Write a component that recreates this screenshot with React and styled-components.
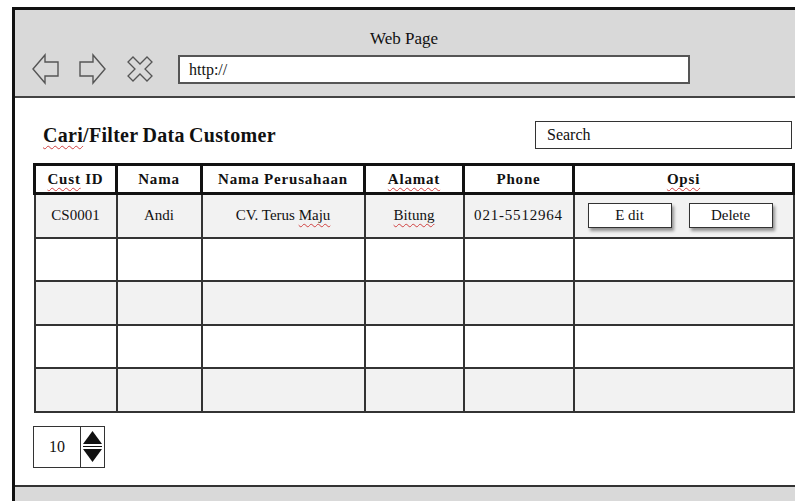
import React from "react";
import styled, { createGlobalStyle } from "styled-components";

const GlobalStyle = createGlobalStyle`
  html, body {
    margin: 0;
    padding: 0;
    background: #fff;
    font-family: "Liberation Serif", "Times New Roman", serif;
    color: #111;
  }
`;

const Frame = styled.div`
  margin: 7px 0 0 12px;
  height: calc(100vh - 7px);
  border-top: 3px solid #111;
  border-left: 3px solid #111;
  display: flex;
  flex-direction: column;
  box-sizing: border-box;
`;

const Header = styled.div`
  background: #d9d9d9;
  border-bottom: 2px solid #444;
  height: 88px;
  box-sizing: border-box;
  padding-top: 19px;
`;

const PageTitle = styled.div`
  text-align: center;
  font-size: 17px;
  line-height: 20px;
  padding-right: 2px;
`;

const NavRow = styled.div`
  display: flex;
  align-items: center;
  padding-left: 17px;
  margin-top: 4px;
`;

const NavIcon = styled.svg`
  width: ${(p) => p.$size || 28}px;
  height: 32px;
  margin-right: ${(p) => p.$gap || 18}px;
  flex-shrink: 0;
`;

const UrlBar = styled.div`
  width: 512px;
  height: 29px;
  box-sizing: border-box;
  border: 2px solid #555;
  background: #fff;
  font-size: 16px;
  line-height: 25px;
  padding-left: 9px;
`;

const Content = styled.div`
  flex: 1;
  padding: 12px 3px 0 18px;
`;

const TopRow = styled.div`
  display: flex;
  justify-content: space-between;
  align-items: flex-end;
  height: 39px;
`;

const Heading = styled.h1`
  margin: 0 0 3px 10px;
  font-size: 20px;
  font-weight: bold;
  line-height: 22px;
  letter-spacing: 0.3px;
  word-spacing: -1px;
`;

const Squiggle = styled.span`
  text-decoration: underline wavy #d04040;
  text-decoration-thickness: 1px;
  text-underline-offset: 3px;
  text-decoration-skip-ink: none;
`;

const SearchBox = styled.div`
  width: 257px;
  height: 28px;
  box-sizing: border-box;
  border: 1.5px solid #333;
  font-size: 16px;
  line-height: 25px;
  padding-left: 11px;
`;

const Table = styled.table`
  width: 759px;
  border-collapse: collapse;
  table-layout: fixed;
  margin-top: 14px;
`;

const Th = styled.th`
  border: 3px solid #111;
  height: 26px;
  font-size: 15px;
  font-weight: bold;
  padding: 0;
  letter-spacing: 0.8px;
`;

const Tr = styled.tr`
  background: ${(p) => (p.$shade ? "#f2f2f2" : "#fff")};
`;

const Td = styled.td`
  border: 2px solid #333;
  height: 41.5px;
  padding: 0;
  text-align: center;
  font-size: 15px;
  letter-spacing: ${(p) => (p.$wide ? "0.8px" : "0")};
`;

const ButtonRow = styled.div`
  display: flex;
  gap: 17px;
  padding-left: 13px;
`;

const Button = styled.div`
  width: 84px;
  height: 25px;
  box-sizing: border-box;
  border: 1.5px solid #333;
  background: #fff;
  box-shadow: 2px 3px 3px rgba(0, 0, 0, 0.4);
  font-size: 15px;
  line-height: 22px;
  text-align: center;
`;

const Spinner = styled.div`
  display: flex;
  width: 72px;
  height: 42px;
  box-sizing: border-box;
  border: 1.5px solid #333;
  margin-top: 13px;
`;

const SpinValue = styled.div`
  width: 46px;
  border-right: 1.5px solid #333;
  font-size: 16px;
  display: flex;
  align-items: center;
  justify-content: center;
`;

const SpinArrows = styled.svg`
  width: 23px;
  height: 39px;
`;

const Footer = styled.div`
  height: 14px;
  background: #d9d9d9;
  border-top: 2px solid #333;
`;

const columns = [82, 85, 163, 99, 110, 220];

const rows = [
  { id: "CS0001", name: "Andi", company: true, city: true, phone: "021-5512964", actions: true },
  {},
  {},
  {},
  {},
];

const BackIcon = () => (
  <NavIcon viewBox="0 0 28 32" $gap={18}>
    <path d="M1 16 L13 2 L13 9 L26 9 L26 23 L13 23 L13 30 Z" fill="none" stroke="#555" strokeWidth="1.4" />
  </NavIcon>
);

const ForwardIcon = () => (
  <NavIcon viewBox="0 0 28 32" $gap={21}>
    <path d="M27 16 L15 2 L15 9 L2 9 L2 23 L15 23 L15 30 Z" fill="none" stroke="#555" strokeWidth="1.4" />
  </NavIcon>
);

const StopIcon = () => (
  <NavIcon viewBox="0 0 26 32" $size={26} $gap={25}>
    <path
      d="M1 6 L6 1 L13 8 L20 1 L25 6 L18 13 L25 20 L20 25 L13 18 L6 25 L1 20 L8 13 Z"
      transform="translate(0 3)"
      fill="none"
      stroke="#555"
      strokeWidth="1.3"
    />
  </NavIcon>
);

const App = () => {
  return (
    <>
      <GlobalStyle />
      <Frame>
        <Header>
          <PageTitle>Web Page</PageTitle>
          <NavRow>
            <BackIcon />
            <ForwardIcon />
            <StopIcon />
            <UrlBar>http://</UrlBar>
          </NavRow>
        </Header>

        <Content>
          <TopRow>
            <Heading>
              <Squiggle>Cari</Squiggle>/Filter Data Customer
            </Heading>
            <SearchBox>Search</SearchBox>
          </TopRow>

          <Table>
            <colgroup>
              {columns.map((w, i) => (
                <col key={i} style={{ width: w }} />
              ))}
            </colgroup>
            <thead>
              <tr>
                <Th>
                  <Squiggle>Cust</Squiggle> ID
                </Th>
                <Th>Nama</Th>
                <Th>Nama Perusahaan</Th>
                <Th>
                  <Squiggle>Alamat</Squiggle>
                </Th>
                <Th>Phone</Th>
                <Th>
                  <Squiggle>Opsi</Squiggle>
                </Th>
              </tr>
            </thead>
            <tbody>
              {rows.map((r, i) => (
                <Tr key={i} $shade={i % 2 === 0}>
                  <Td>{r.id}</Td>
                  <Td>{r.name}</Td>
                  <Td>
                    {r.company && (
                      <>
                        CV. Terus <Squiggle>Maju</Squiggle>
                      </>
                    )}
                  </Td>
                  <Td>{r.city && <Squiggle>Bitung</Squiggle>}</Td>
                  <Td $wide>{r.phone}</Td>
                  <Td>
                    {r.actions && (
                      <ButtonRow>
                        <Button>E dit</Button>
                        <Button>Delete</Button>
                      </ButtonRow>
                    )}
                  </Td>
                </Tr>
              ))}
            </tbody>
          </Table>

          <Spinner>
            <SpinValue>10</SpinValue>
            <SpinArrows viewBox="0 0 23 39">
              <path d="M2 17 L11.5 4 L21 17 Z" fill="#111" />
              <line x1="2" y1="19.5" x2="21" y2="19.5" stroke="#111" strokeWidth="1" />
              <path d="M2 22 L21 22 L11.5 35 Z" fill="#111" />
            </SpinArrows>
          </Spinner>
        </Content>

        <Footer />
      </Frame>
    </>
  );
};

export default App;
